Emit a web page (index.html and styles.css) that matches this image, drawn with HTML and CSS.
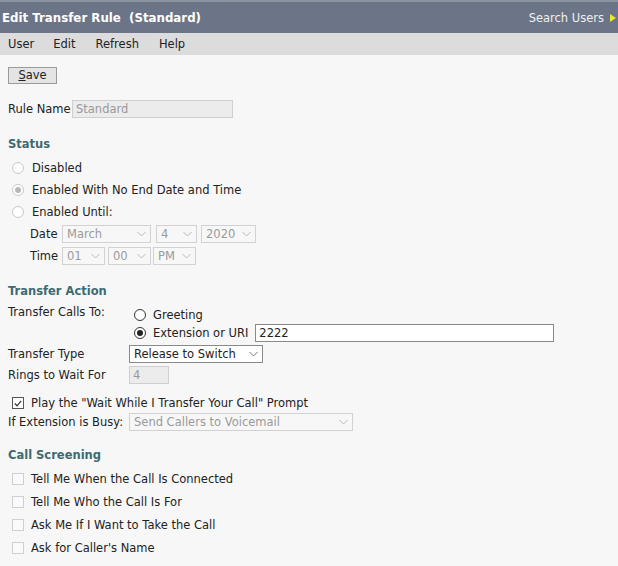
FILE: index.html
```html
<!DOCTYPE html>
<html>
<head>
<meta charset="utf-8">
<link rel="stylesheet" href="styles.css">
</head>
<body>
<div class="titlebar">
  <div class="title">Edit Transfer Rule &nbsp;(Standard)</div>
  <div class="search">Search Users <svg class="arrow" width="6" height="8" viewBox="0 0 6 8"><path d="M0 0 L6 4 L0 8 Z" fill="#e8e832"/></svg></div>
</div>
<div class="menubar">
  <span class="menu-item menu-first">User</span>
  <span class="menu-item">Edit</span>
  <span class="menu-item">Refresh</span>
  <span class="menu-item">Help</span>
</div>
<div class="content">
  <div class="toolbar"><button class="btn"><u>S</u>ave</button></div>

  <div class="rule-row">
    <span class="label rule-label">Rule Name</span>
    <span class="field field-disabled rule-name">Standard</span>
  </div>

  <h2 class="heading heading-status">Status</h2>
  <div class="radio-list">
    <div class="opt"><span class="radio radio-faded"></span><span>Disabled</span></div>
    <div class="opt"><span class="radio radio-faded radio-on"></span><span>Enabled With No End Date and Time</span></div>
    <div class="opt"><span class="radio radio-faded"></span><span>Enabled Until:</span></div>
  </div>
  <div class="datetime">
    <div class="dt-row">
      <span class="dt-label">Date</span>
      <span class="sel sel-disabled w-month">March<svg class="chev" width="9" height="6" viewBox="0 0 9 6"><path d="M0.5 1 L4.5 5 L8.5 1" fill="none" stroke="#b8b8b8" stroke-width="1"/></svg></span>
      <span class="sel sel-disabled w-day">4<svg class="chev" width="9" height="6" viewBox="0 0 9 6"><path d="M0.5 1 L4.5 5 L8.5 1" fill="none" stroke="#b8b8b8" stroke-width="1"/></svg></span>
      <span class="sel sel-disabled w-year">2020<svg class="chev" width="9" height="6" viewBox="0 0 9 6"><path d="M0.5 1 L4.5 5 L8.5 1" fill="none" stroke="#b8b8b8" stroke-width="1"/></svg></span>
    </div>
    <div class="dt-row">
      <span class="dt-label">Time</span>
      <span class="sel sel-disabled w-hour">01<svg class="chev" width="9" height="6" viewBox="0 0 9 6"><path d="M0.5 1 L4.5 5 L8.5 1" fill="none" stroke="#b8b8b8" stroke-width="1"/></svg></span>
      <span class="sel sel-disabled w-min">00<svg class="chev" width="9" height="6" viewBox="0 0 9 6"><path d="M0.5 1 L4.5 5 L8.5 1" fill="none" stroke="#b8b8b8" stroke-width="1"/></svg></span>
      <span class="sel sel-disabled w-ampm">PM<svg class="chev" width="9" height="6" viewBox="0 0 9 6"><path d="M0.5 1 L4.5 5 L8.5 1" fill="none" stroke="#b8b8b8" stroke-width="1"/></svg></span>
    </div>
  </div>

  <h2 class="heading heading-transfer">Transfer Action</h2>
  <div class="form-grid">
    <span class="label calls-label">Transfer Calls To:</span>
    <div class="calls-opts">
      <div class="opt2"><span class="radio radio-dark"></span><span>Greeting</span></div>
      <div class="opt2"><span class="radio radio-dark radio-on"></span><span>Extension or URI</span><span class="field field-white ext">2222</span></div>
    </div>
    <span class="label">Transfer Type</span>
    <div class="cell"><span class="sel sel-active w-type">Release to Switch<svg class="chev" width="9" height="6" viewBox="0 0 9 6"><path d="M0.5 1 L4.5 5 L8.5 1" fill="none" stroke="#777" stroke-width="1"/></svg></span></div>
    <span class="label">Rings to Wait For</span>
    <div class="cell"><span class="field field-disabled rings">4</span></div>
  </div>
  <div class="check-row prompt-row"><span class="check check-on"><svg width="11" height="11" viewBox="0 0 11 11"><path d="M2 5.5 L4.5 8 L9 2.5" fill="none" stroke="#333" stroke-width="1.3"/></svg></span><span>Play the "Wait While I Transfer Your Call" Prompt</span></div>
  <div class="busy-row">
    <span class="label">If Extension is Busy:</span>
    <span class="sel sel-disabled w-busy">Send Callers to Voicemail<svg class="chev" width="9" height="6" viewBox="0 0 9 6"><path d="M0.5 1 L4.5 5 L8.5 1" fill="none" stroke="#b8b8b8" stroke-width="1"/></svg></span>
  </div>

  <h2 class="heading heading-screen">Call Screening</h2>
  <div class="check-list">
    <div class="check-row"><span class="check"></span><span>Tell Me When the Call Is Connected</span></div>
    <div class="check-row"><span class="check"></span><span>Tell Me Who the Call Is For</span></div>
    <div class="check-row"><span class="check"></span><span>Ask Me If I Want to Take the Call</span></div>
    <div class="check-row"><span class="check"></span><span>Ask for Caller's Name</span></div>
  </div>
</div>
</body>
</html>
```

FILE: styles.css
```css
* { box-sizing: border-box; }
html, body {
  margin: 0;
  padding: 0;
  background: #f7f7f7;
  font-family: "DejaVu Sans", Verdana, sans-serif;
  font-size: 11.5px;
  color: #222;
  height: 100%;
}
.titlebar {
  height: 33px;
  background: #6b7587;
  border-top: 2px solid #8a93a2;
  display: flex;
  justify-content: space-between;
  align-items: flex-start;
  color: #fff;
}
.title {
  font-weight: bold;
  font-size: 11.8px;
  padding: 9px 0 0 2px;
}
.search {
  padding: 9px 0 0 0;
  font-size: 11.5px;
  color: #f0f0f0;
  display: flex;
  align-items: center;
  gap: 6px;
  margin-right: 2px;
}
.arrow { display: block; }
.menubar {
  height: 22px;
  background: #dcdcdc;
  display: flex;
  align-items: center;
  padding-left: 8px;
}
.menu-item { margin-right: 20px; }
.menu-first { margin-right: 19px; }
.content { padding: 0 8px; }
.toolbar { padding-top: 12px; height: 45px; }
.btn {
  font: inherit;
  color: #222;
  background: #e4e4e4;
  border: 1px solid #9a9a9a;
  width: 49px;
  height: 17px;
  padding: 0;
  line-height: 15px;
}
.rule-row {
  display: flex;
  align-items: center;
  height: 18px;
}
.rule-label { width: 64px; }
.field {
  display: inline-flex;
  align-items: center;
  height: 18px;
  padding-left: 3px;
}
.field-disabled {
  background: #ececec;
  border: 1px solid #cfcfcf;
  color: #999;
}
.field-white {
  background: #fff;
  border: 1px solid #8a8a8a;
  color: #222;
}
.rule-name { width: 161px; }
.heading {
  margin: 0;
  font-size: 11.5px;
  font-weight: bold;
  color: #3f6a72;
}
.heading-status { margin-top: 19px; height: 16px; }
.radio-list { margin-top: 4px; }
.opt {
  display: flex;
  align-items: center;
  height: 22px;
  gap: 8px;
  padding-left: 4px;
}
.radio {
  display: inline-block;
  width: 12px;
  height: 12px;
  border-radius: 50%;
  position: relative;
  flex: none;
}
.radio-faded { border: 1px solid #c9c9c9; background: #fff; }
.radio-faded.radio-on::after {
  content: "";
  position: absolute;
  left: 2px; top: 2px;
  width: 6px; height: 6px;
  border-radius: 50%;
  background: #b8b8b8;
}
.radio-dark { border: 1px solid #333; background: #fff; }
.radio-dark.radio-on::after {
  content: "";
  position: absolute;
  left: 2px; top: 2px;
  width: 6px; height: 6px;
  border-radius: 50%;
  background: #222;
}
.datetime { padding-left: 22px; }
.dt-row {
  display: flex;
  align-items: center;
  height: 22px;
}
.dt-label { width: 32px; }
.sel {
  display: inline-flex;
  align-items: center;
  justify-content: space-between;
  height: 18px;
  padding: 0 4px 0 4px;
  white-space: nowrap;
}
.sel-disabled {
  background: #f7f7f7;
  border: 1px solid #d2d2d2;
  color: #9a9a9a;
}
.sel-active {
  background: #fff;
  border: 1px solid #8a8a8a;
  color: #222;
}
.chev { display: block; flex: none; }
.w-month { width: 89px; }
.w-day { width: 41px; margin-left: 5px; }
.w-year { width: 55px; margin-left: 4px; }
.w-hour { width: 43px; }
.w-min { width: 43px; margin-left: 3px; }
.w-ampm { width: 43px; margin-left: 2px; }
.w-type { width: 134px; }
.w-busy { width: 224px; }
.heading-transfer { margin-top: 17px; height: 16px; }
.form-grid {
  display: grid;
  grid-template-columns: 121px 1fr;
  row-gap: 3px;
  margin-top: 5px;
}
.label { white-space: nowrap; display: flex; align-items: center; }
.calls-label { align-items: flex-start; }
.calls-opts { padding-left: 5px; padding-top: 1px; }
.opt2 {
  display: flex;
  align-items: center;
  height: 18px;
  gap: 7px;
}
.ext { width: 299px; margin-left: 0; }
.cell { display: flex; align-items: center; height: 18px; }
.rings { width: 40px; }
.check-row {
  display: flex;
  align-items: center;
  height: 23px;
  gap: 7px;
  padding-left: 4px;
}
.check {
  width: 12px;
  height: 12px;
  border: 1px solid #cfcfcf;
  background: #fafafa;
  flex: none;
  display: inline-flex;
  align-items: center;
  justify-content: center;
}
.check-on { border-color: #555; background: #fff; }
.check-on svg { display: block; }
.prompt-row { margin-top: 9px; height: 20px; }
.busy-row {
  display: grid;
  grid-template-columns: 121px auto;
  justify-content: start;
  align-items: center;
  height: 18px;
}
.heading-screen { margin-top: 17px; height: 16px; }
.check-list { margin-top: 3px; }
```
